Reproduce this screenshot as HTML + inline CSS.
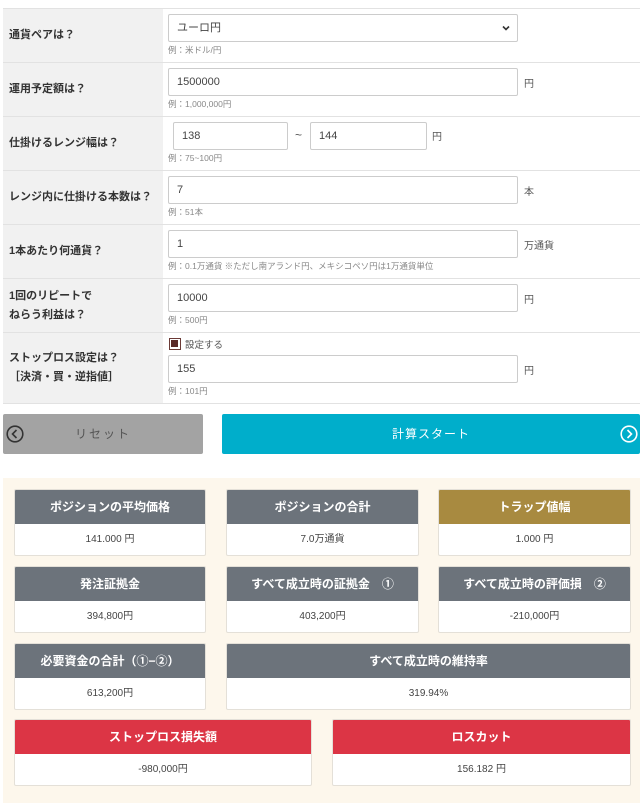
<!DOCTYPE html>
<html><head><meta charset="utf-8"><style>
*{margin:0;padding:0;box-sizing:border-box}
body{width:640px;height:806px;background:#fff;font-family:"Liberation Sans","Noto Sans CJK JP",sans-serif;color:#333;position:relative;overflow:hidden}
.a{position:absolute}
.lab{position:absolute;left:3px;width:160px;background:#f1f1f1;font-size:11px;font-weight:bold;padding-left:6px;display:flex;align-items:center;line-height:19px;color:#333}
.row{position:absolute;left:3px;right:0;border-top:1px solid #e2e2e2}
.inp{position:absolute;height:28px;border:1px solid #ccc;border-radius:2px;background:#fff;font-size:11px;padding-left:8px;line-height:26px;color:#444}
.hint{position:absolute;left:168px;font-size:8.5px;color:#888}
.unit{position:absolute;font-size:10px;color:#555}
.box{position:absolute;background:#fff;border:1px solid #e4e0d8;border-radius:2px;overflow:hidden}
.box .h{height:34px;line-height:34px;text-align:center;color:#fff;font-weight:bold;font-size:12px;background:#6c737b}
.box .v{height:31px;line-height:31px;text-align:center;font-size:10px;color:#444}
</style></head><body>
<div class="row" style="top:8px"></div>
<div class="row" style="top:62px"></div>
<div class="row" style="top:116px"></div>
<div class="row" style="top:170px"></div>
<div class="row" style="top:224px"></div>
<div class="row" style="top:278px"></div>
<div class="row" style="top:332px"></div>
<div class="row" style="top:403px"></div>
<div class="lab" style="top:9px;height:53px">通貨ペアは？</div>
<div class="lab" style="top:63px;height:53px">運用予定額は？</div>
<div class="lab" style="top:117px;height:53px">仕掛けるレンジ幅は？</div>
<div class="lab" style="top:171px;height:53px">レンジ内に仕掛ける本数は？</div>
<div class="lab" style="top:225px;height:53px">1本あたり何通貨？</div>
<div class="lab" style="top:279px;height:53px">1回のリピートで<br>ねらう利益は？</div>
<div class="lab" style="top:333px;height:70px">ストップロス設定は？<br>［決済・買・逆指値］</div>

<div class="inp" style="left:168px;top:14px;width:350px">ユーロ円<svg class="a" style="right:7px;top:10px" width="8" height="6" viewBox="0 0 8 6"><path d="M1 1.5L4 4.5L7 1.5" stroke="#333" stroke-width="1.6" fill="none"/></svg></div>
<div class="hint" style="top:44px">例：米ドル/円</div>
<div class="inp" style="left:168px;top:68px;width:350px">1500000</div><div class="unit" style="left:524px;top:75px">円</div>
<div class="hint" style="top:98px">例：1,000,000円</div>
<div class="inp" style="left:173px;top:122px;width:115px">138</div>
<div class="unit" style="left:295px;top:128px;font-size:12px">~</div>
<div class="inp" style="left:310px;top:122px;width:117px">144</div><div class="unit" style="left:432px;top:128px">円</div>
<div class="hint" style="top:152px">例：75~100円</div>
<div class="inp" style="left:168px;top:176px;width:350px">7</div><div class="unit" style="left:524px;top:183px">本</div>
<div class="hint" style="top:206px">例：51本</div>
<div class="inp" style="left:168px;top:230px;width:350px">1</div><div class="unit" style="left:524px;top:237px">万通貨</div>
<div class="hint" style="top:260px">例：0.1万通貨 ※ただし南アランド円、メキシコペソ円は1万通貨単位</div>
<div class="inp" style="left:168px;top:284px;width:350px">10000</div><div class="unit" style="left:524px;top:291px">円</div>
<div class="hint" style="top:314px">例：500円</div>
<div class="a" style="left:169px;top:338px;width:12px;height:12px;border:1.5px solid #6b3a36;background:#fff"><div class="a" style="left:1px;top:1px;width:7px;height:7px;background:#5a2a28"></div></div>
<div class="a" style="left:185px;top:337px;font-size:9.5px;color:#555">設定する</div>
<div class="inp" style="left:168px;top:355px;width:350px">155</div><div class="unit" style="left:524px;top:362px">円</div>
<div class="hint" style="top:385px">例：101円</div>

<div class="a" style="left:3px;top:414px;width:200px;height:40px;background:#a3a3a3;border-radius:2px;color:#555;font-size:12px;line-height:40px;text-align:center;letter-spacing:2px">リセット
<svg class="a" style="left:3px;top:11px" width="18" height="18" viewBox="0 0 18 18"><circle cx="9" cy="9" r="7.8" stroke="#333" stroke-width="1.6" fill="none"/><path d="M10.5 5L6.5 9L10.5 13" stroke="#333" stroke-width="1.6" fill="none"/></svg></div>
<div class="a" style="left:222px;top:414px;width:418px;height:40px;background:#00aecb;border-radius:2px;color:#fff;font-size:12px;line-height:40px;text-align:center;letter-spacing:1px">計算スタート
<svg class="a" style="left:398px;top:11px" width="18" height="18" viewBox="0 0 18 18"><circle cx="9" cy="9" r="7.8" stroke="#fff" stroke-width="1.6" fill="none"/><path d="M7.5 5L11.5 9L7.5 13" stroke="#fff" stroke-width="1.6" fill="none"/></svg></div>

<div class="a" style="left:3px;top:478px;width:637px;height:325px;background:#fdf7ec"></div>
<div class="box" style="left:14px;top:489px;width:192px"><div class="h">ポジションの平均価格</div><div class="v">141.000 円</div></div>
<div class="box" style="left:226px;top:489px;width:193px"><div class="h">ポジションの合計</div><div class="v">7.0万通貨</div></div>
<div class="box" style="left:438px;top:489px;width:193px"><div class="h" style="background:#a88a40">トラップ値幅</div><div class="v">1.000 円</div></div>
<div class="box" style="left:14px;top:566px;width:192px"><div class="h">発注証拠金</div><div class="v">394,800円</div></div>
<div class="box" style="left:226px;top:566px;width:193px"><div class="h">すべて成立時の証拠金　①</div><div class="v">403,200円</div></div>
<div class="box" style="left:438px;top:566px;width:193px"><div class="h">すべて成立時の評価損　②</div><div class="v">-210,000円</div></div>
<div class="box" style="left:14px;top:643px;width:192px"><div class="h">必要資金の合計（①−②）</div><div class="v">613,200円</div></div>
<div class="box" style="left:226px;top:643px;width:405px"><div class="h">すべて成立時の維持率</div><div class="v">319.94%</div></div>
<div class="box" style="left:14px;top:719px;width:298px"><div class="h" style="background:#dc3545">ストップロス損失額</div><div class="v">-980,000円</div></div>
<div class="box" style="left:332px;top:719px;width:299px"><div class="h" style="background:#dc3545">ロスカット</div><div class="v">156.182 円</div></div>
</body></html>
